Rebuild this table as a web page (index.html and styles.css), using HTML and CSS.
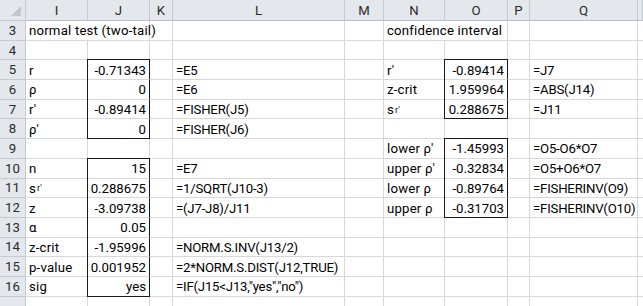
FILE: index.html
```html
<!DOCTYPE html>
<html>
<head>
<meta charset="utf-8">
<link rel="stylesheet" href="styles.css">
</head>
<body>
<div class="sheet">
  <div class="hd corner"><span class="tri"></span></div>
  <div class="hd col">I</div>
  <div class="hd col">J</div>
  <div class="hd col">K</div>
  <div class="hd col">L</div>
  <div class="hd col">M</div>
  <div class="hd col">N</div>
  <div class="hd col">O</div>
  <div class="hd col">P</div>
  <div class="hd col">Q</div>
  <div class="hd col"></div>

  <!-- row 3 -->
  <div class="hd row">3</div>
  <div class="c t span2">normal test (two-tail)</div>
  <div class="c"></div><div class="c"></div><div class="c"></div>
  <div class="c t span2">confidence interval</div>
  <div class="c"></div><div class="c"></div><div class="c"></div>

  <!-- row 4 -->
  <div class="hd row">4</div>
  <div class="c"></div><div class="c"></div><div class="c"></div><div class="c"></div><div class="c"></div>
  <div class="c"></div><div class="c"></div><div class="c"></div><div class="c"></div><div class="c"></div>

  <!-- row 5 -->
  <div class="hd row">5</div>
  <div class="c t">r</div>
  <div class="c n bt">-0.71343</div>
  <div class="c"></div>
  <div class="c f">=E5</div>
  <div class="c"></div>
  <div class="c t">r'</div>
  <div class="c n bt">-0.89414</div>
  <div class="c"></div>
  <div class="c f">=J7</div>
  <div class="c"></div>

  <!-- row 6 -->
  <div class="hd row">6</div>
  <div class="c t">ρ</div>
  <div class="c n bx">0</div>
  <div class="c"></div>
  <div class="c f">=E6</div>
  <div class="c"></div>
  <div class="c t">z-crit</div>
  <div class="c n bx">1.959964</div>
  <div class="c"></div>
  <div class="c f">=ABS(J14)</div>
  <div class="c"></div>

  <!-- row 7 -->
  <div class="hd row">7</div>
  <div class="c t">r'</div>
  <div class="c n bx">-0.89414</div>
  <div class="c"></div>
  <div class="c f">=FISHER(J5)</div>
  <div class="c"></div>
  <div class="c t">s<sub>r'</sub></div>
  <div class="c n bx bb">0.288675</div>
  <div class="c"></div>
  <div class="c f">=J11</div>
  <div class="c"></div>

  <!-- row 8 -->
  <div class="hd row">8</div>
  <div class="c t">ρ'</div>
  <div class="c n bx bb">0</div>
  <div class="c"></div>
  <div class="c f">=FISHER(J6)</div>
  <div class="c"></div>
  <div class="c"></div><div class="c"></div><div class="c"></div><div class="c"></div><div class="c"></div>

  <!-- row 9 -->
  <div class="hd row">9</div>
  <div class="c"></div><div class="c"></div><div class="c"></div><div class="c"></div><div class="c"></div>
  <div class="c t">lower ρ'</div>
  <div class="c n bt">-1.45993</div>
  <div class="c"></div>
  <div class="c f">=O5-O6*O7</div>
  <div class="c"></div>

  <!-- row 10 -->
  <div class="hd row">10</div>
  <div class="c t">n</div>
  <div class="c n bt">15</div>
  <div class="c"></div>
  <div class="c f">=E7</div>
  <div class="c"></div>
  <div class="c t">upper ρ'</div>
  <div class="c n bx">-0.32834</div>
  <div class="c"></div>
  <div class="c f">=O5+O6*O7</div>
  <div class="c"></div>

  <!-- row 11 -->
  <div class="hd row">11</div>
  <div class="c t">s<sub>r'</sub></div>
  <div class="c n bx">0.288675</div>
  <div class="c"></div>
  <div class="c f">=1/SQRT(J10-3)</div>
  <div class="c"></div>
  <div class="c t">lower ρ</div>
  <div class="c n bx">-0.89764</div>
  <div class="c"></div>
  <div class="c f">=FISHERINV(O9)</div>
  <div class="c"></div>

  <!-- row 12 -->
  <div class="hd row">12</div>
  <div class="c t">z</div>
  <div class="c n bx">-3.09738</div>
  <div class="c"></div>
  <div class="c f">=(J7-J8)/J11</div>
  <div class="c"></div>
  <div class="c t">upper ρ</div>
  <div class="c n bx bb">-0.31703</div>
  <div class="c"></div>
  <div class="c f">=FISHERINV(O10)</div>
  <div class="c"></div>

  <!-- row 13 -->
  <div class="hd row">13</div>
  <div class="c t">α</div>
  <div class="c n bx">0.05</div>
  <div class="c"></div><div class="c"></div><div class="c"></div>
  <div class="c"></div><div class="c"></div><div class="c"></div><div class="c"></div><div class="c"></div>

  <!-- row 14 -->
  <div class="hd row">14</div>
  <div class="c t">z-crit</div>
  <div class="c n bx">-1.95996</div>
  <div class="c"></div>
  <div class="c f">=NORM.S.INV(J13/2)</div>
  <div class="c"></div>
  <div class="c"></div><div class="c"></div><div class="c"></div><div class="c"></div><div class="c"></div>

  <!-- row 15 -->
  <div class="hd row">15</div>
  <div class="c t">p-value</div>
  <div class="c n bx">0.001952</div>
  <div class="c"></div>
  <div class="c f">=2*NORM.S.DIST(J12,TRUE)</div>
  <div class="c"></div>
  <div class="c"></div><div class="c"></div><div class="c"></div><div class="c"></div><div class="c"></div>

  <!-- row 16 -->
  <div class="hd row">16</div>
  <div class="c t">sig</div>
  <div class="c n bx bb">yes</div>
  <div class="c"></div>
  <div class="c f">=IF(J15&lt;J13,"yes","no")</div>
  <div class="c"></div>
  <div class="c"></div><div class="c"></div><div class="c"></div><div class="c"></div><div class="c"></div>

  <!-- row 17 (partially visible) -->
  <div class="hd row"></div>
  <div class="c"></div><div class="c"></div><div class="c"></div><div class="c"></div><div class="c"></div>
  <div class="c"></div><div class="c"></div><div class="c"></div><div class="c"></div><div class="c"></div>
</div>
</body>
</html>
```

FILE: styles.css
```css
html, body {
  margin: 0;
  padding: 0;
  background: #ffffff;
  overflow: hidden;
}

.sheet {
  display: grid;
  grid-template-columns: 26px 62px 62px 23px 172px 39px 61px 63px 22px 108px 5px;
  grid-template-rows: 21px repeat(15, 19.7px);
  width: 643px;
  font-family: Roboto, "Liberation Sans", sans-serif;
  font-size: 13.2px;
  color: #000;
}

.hd {
  background: #e4e7eb;
  border-right: 1px solid #c5cad0;
  border-bottom: 1px solid #c5cad0;
  color: #2a2a2a;
  display: flex;
  align-items: center;
  justify-content: center;
  box-sizing: border-box;
}

.col {
  border-bottom-color: #b9bfc6;
}

.corner {
  position: relative;
}

.tri {
  position: absolute;
  right: 4px;
  bottom: 4px;
  width: 0;
  height: 0;
  border-left: 10px solid transparent;
  border-bottom: 10px solid #c4c8cd;
}

.c {
  border-right: 1px solid #d8d8d8;
  border-bottom: 1px solid #d8d8d8;
  box-sizing: border-box;
  padding: 1px 3px 0;
  display: flex;
  align-items: center;
  white-space: nowrap;
  min-width: 0;
}

.t {
  letter-spacing: 0.2px;
}

.f {
  letter-spacing: -0.2px;
}

.span2 {
  grid-column: span 2;
}

.n {
  justify-content: flex-end;
}

.bx {
  border-right-color: #1a1a1a;
  box-shadow: -1px 0 0 #1a1a1a;
}

.bt {
  border-right-color: #1a1a1a;
  box-shadow: -1px 0 0 #1a1a1a, 0 -1px 0 #1a1a1a, -1px -1px 0 #1a1a1a;
}

.bb {
  border-bottom-color: #1a1a1a;
}

sub {
  font-size: 9px;
  vertical-align: -3px;
  line-height: 0;
  margin-left: 1px;
}
```
